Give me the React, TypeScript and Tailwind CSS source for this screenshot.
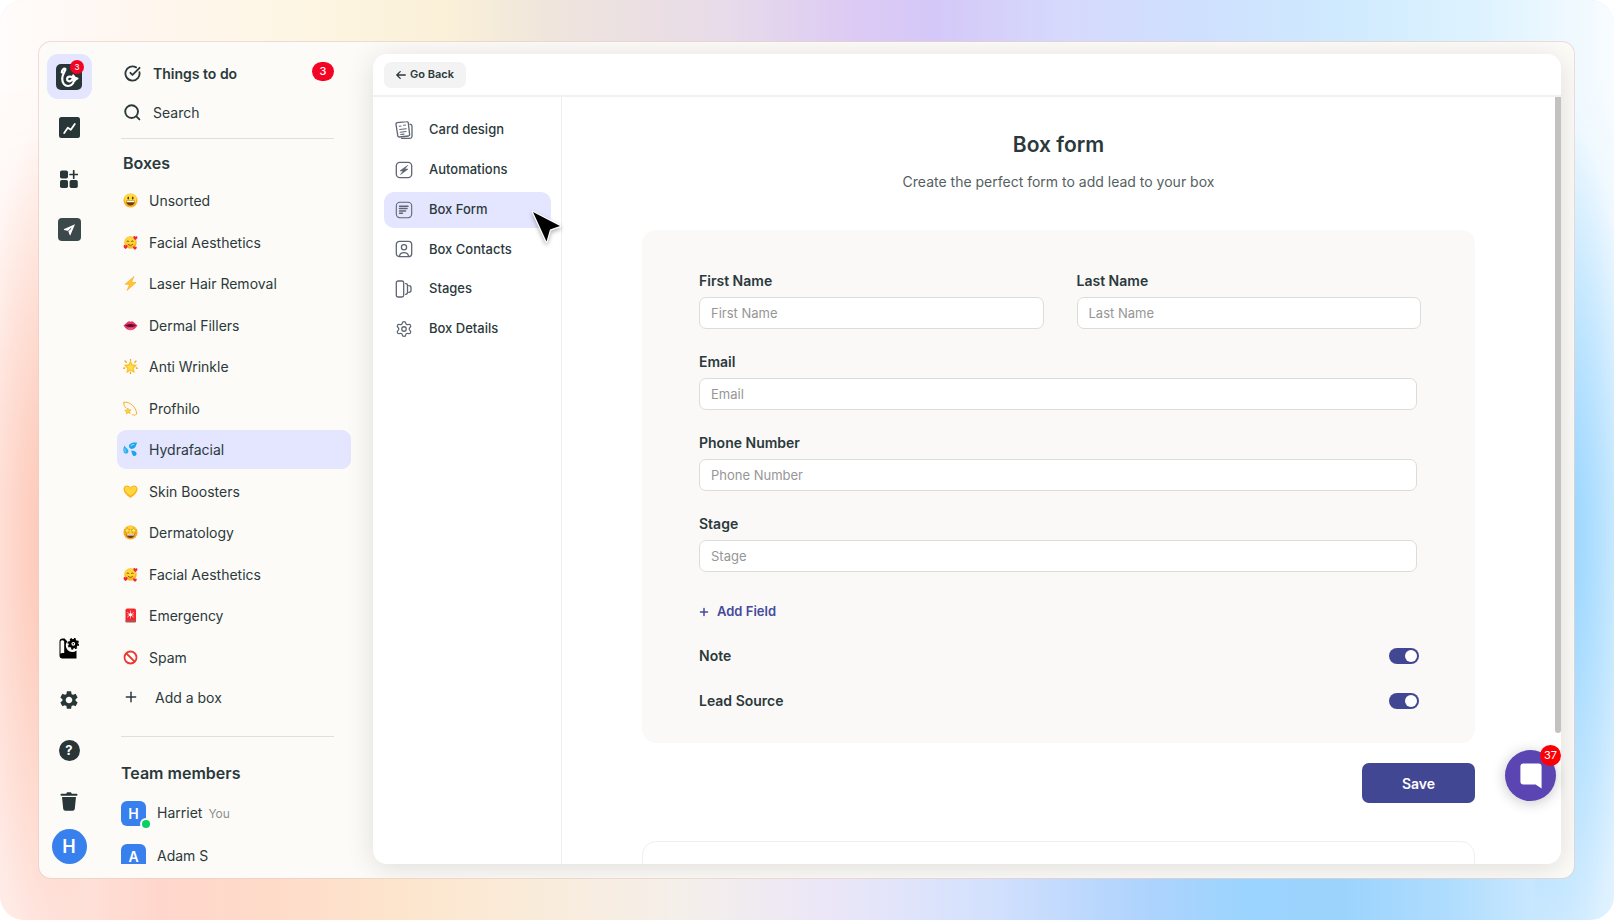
import { useId, useState, type ReactNode } from "react";

import clsx from "clsx";
import { CircleCheckBig, Plus, Settings } from "lucide-react";
import { MdSettings } from "react-icons/md";

type EmojiName =
  | "smile"
  | "hearts"
  | "bolt"
  | "lips"
  | "star"
  | "dizzy"
  | "drops"
  | "heart"
  | "starstruck"
  | "siren"
  | "banned";

const boxes: { name: string; emoji: EmojiName }[] = [
  { name: "Unsorted", emoji: "smile" },
  { name: "Facial Aesthetics", emoji: "hearts" },
  { name: "Laser Hair Removal", emoji: "bolt" },
  { name: "Dermal Fillers", emoji: "lips" },
  { name: "Anti Wrinkle", emoji: "star" },
  { name: "Profhilo", emoji: "dizzy" },
  { name: "Hydrafacial", emoji: "drops" },
  { name: "Skin Boosters", emoji: "heart" },
  { name: "Dermatology", emoji: "starstruck" },
  { name: "Facial Aesthetics", emoji: "hearts" },
  { name: "Emergency", emoji: "siren" },
  { name: "Spam", emoji: "banned" },
];

const settingsNav: { title: string; icon: ReactNode }[] = [
  { title: "Card design", icon: <CardDesignIcon /> },
  { title: "Automations", icon: <AutomationsIcon /> },
  { title: "Box Form", icon: <BoxFormIcon /> },
  { title: "Box Contacts", icon: <ContactsIcon /> },
  { title: "Stages", icon: <StagesIcon /> },
  { title: "Box Details", icon: <Settings className="size-[18px]" strokeWidth={1.7} /> },
];

export default function App() {
  return (
    <div className="relative isolate flex h-screen overflow-hidden rounded-[24px] pt-[41px] pr-[39px] pb-[41px] pl-[38px] font-['Inter',sans-serif] text-[#2b393c]">
      <Backdrop />

      <div className="flex min-w-0 flex-1 overflow-hidden rounded-[13px] border border-[#eacfc8]/70 bg-[#fcfbf7] bg-clip-padding">
        <Rail />
        <Sidebar />
        <Panel />
      </div>
    </div>
  );
}

function Backdrop() {
  return (
    <div className="absolute inset-0 -z-10 bg-[linear-gradient(90deg,#ffebe6_0%,#ffd6cb_10%,#fedbc9_17%,#fde5cd_25%,#faebd8_32%,#f5efea_42%,#eae6f8_52%,#d4e1fd_61%,#aed3fd_71%,#9bd4fe_77%,#9bd3fd_83%,#b0ddfe_90%,#e0f2ff_100%)]">
      <div className="absolute inset-0 bg-[linear-gradient(90deg,#fffcfb_0%,#fff6f0_8%,#fef6e4_18%,#faf0d8_28%,#efe5dc_34%,#e8dbea_45%,#dccaf4_53%,#d4c8f8_58%,#d6d9fc_66%,#cfe0ff_74%,#cfeafe_83%,#def3ff_92%,#f8fcff_100%)] [mask-image:linear-gradient(180deg,#000_0%,#000_8%,transparent_55%)]" />
      <div className="absolute inset-y-0 left-0 w-20 bg-[radial-gradient(76px_420px_at_50px_540px,#fdc6b4_0%,#fdc6b400_100%)]" />
      <div className="absolute inset-y-0 right-0 w-20 bg-[radial-gradient(76px_420px_at_30px_540px,#94d4ff_0%,#94d4ff00_100%)]" />
    </div>
  );
}

function Rail() {
  return (
    <nav
      aria-label="Workspace"
      className="flex w-[70px] shrink-0 flex-col items-center justify-between pt-3 pr-2.5 pb-3.5"
    >
      <div className="flex flex-col items-center">
        <RailButton label="Boxes" className="h-[45px] w-[45px] rounded-[11px] bg-[#e4e5ff]">
          <span className="relative">
            <LogoMark />
            <span className="absolute -top-1 -right-0.5 flex size-3.5 items-center justify-center rounded-full bg-[#f40424] text-[8px] leading-none font-medium text-white">
              3
            </span>
          </span>
        </RailButton>
        <RailButton label="Reports" className="h-[51px] w-[45px] pt-1.5">
          <ReportsIcon />
        </RailButton>
        <RailButton label="Apps" className="h-[51px] w-[45px] pt-1.5">
          <AppsIcon />
        </RailButton>
        <RailButton label="Campaigns" className="h-[51px] w-[45px] pt-1.5">
          <PlaneIcon />
        </RailButton>
      </div>

      <div className="flex flex-col items-center">
        <RailButton label="Knowledge base" className="h-[51px] w-[45px]">
          <BookIcon />
        </RailButton>
        <RailButton label="Settings" className="h-[51px] w-[45px]">
          <MdSettings className="size-[22px]" />
        </RailButton>
        <RailButton label="Help" className="h-[51px] w-[45px]">
          <span className="flex size-[21px] items-center justify-center rounded-full bg-[#293638] text-[13px] font-bold text-white">
            ?
          </span>
        </RailButton>
        <RailButton label="Trash" className="h-[51px] w-[45px]">
          <TrashIcon />
        </RailButton>
        <RailButton
          label="Profile"
          className="mt-0.5 size-[35px] rounded-full bg-[#3880ee] text-[18px] font-semibold text-white"
        >
          H
        </RailButton>
      </div>
    </nav>
  );
}

function RailButton({
  label,
  className,
  children,
}: {
  label: string;
  className?: string;
  children: ReactNode;
}) {
  return (
    <button
      type="button"
      aria-label={label}
      className={clsx("flex shrink-0 items-center justify-center text-[#293638]", className)}
    >
      {children}
    </button>
  );
}

function Sidebar() {
  const [active, setActive] = useState(6);

  return (
    <aside className="mt-3 mb-3.5 flex w-[264px] shrink-0 flex-col overflow-hidden pr-[22px] pl-2">
      <div className="flex flex-col pr-[17px] pl-1">
        <button
          type="button"
          className="flex h-[38px] items-center pl-[3px] text-[14px] font-semibold"
        >
          <CircleCheckBig className="size-[17px]" strokeWidth={2.6} />
          <span className="ml-3">Things to do</span>
          <span className="mb-1 ml-auto flex h-[19px] w-[22px] items-center justify-center rounded-full bg-[#f40424] text-[11px] font-medium text-white">
            3
          </span>
        </button>
        <button type="button" className="flex h-10 items-center pl-[3px] text-[14px]">
          <SearchIcon />
          <span className="ml-3">Search</span>
        </button>
        <div className="mt-1.5 border-t border-[#dfdfdb]" />
      </div>

      <h2 className="mt-3 pl-1.5 text-[16px] leading-6 font-semibold">Boxes</h2>

      <ul className="mt-1.5 flex h-[496px] shrink-0 flex-col justify-between">
        {boxes.map((box, index) => (
          <li key={index}>
            <button
              type="button"
              onClick={() => setActive(index)}
              className={clsx(
                "flex h-[39px] w-full items-center gap-[11px] rounded-[9px] pl-1.5 text-[14px]",
                index === active && "bg-[#e4e5ff]",
              )}
            >
              <Emoji name={box.emoji} />
              {box.name}
            </button>
          </li>
        ))}
      </ul>

      <button type="button" className="flex h-10 shrink-0 items-center pl-1.5 text-[14px]">
        <Plus className="size-4" strokeWidth={2.2} />
        <span className="ml-4">Add a box</span>
      </button>
      <div className="mt-[19px] mr-[17px] ml-1 border-t border-[#dfdfdb]" />

      <h2 className="mt-6 pl-1 text-[16px] leading-6 font-semibold">Team members</h2>
      <ul className="mt-4 flex flex-col gap-[18px] pl-1">
        <Member name="Harriet" note="You" online />
        <Member name="Adam S" />
      </ul>
    </aside>
  );
}

function Member({ name, note, online }: { name: string; note?: string; online?: boolean }) {
  return (
    <li className="flex h-[25px] items-center text-[14px]">
      <span className="relative flex size-[25px] items-center justify-center rounded-[6px] bg-[#3880ee] text-[14px] font-semibold text-white">
        {name[0]}
        {online && (
          <span className="absolute -right-1 -bottom-0.5 size-2 rounded-full bg-[#08d064] ring-2 ring-[#fcfbf7]" />
        )}
      </span>
      <span className="ml-[11px] pb-0.5">
        {name}
        {note && <span className="ml-1.5 text-[12px] text-[#8f8f8f]">{note}</span>}
      </span>
    </li>
  );
}

function Panel() {
  return (
    <main className="relative mt-3 mr-[13px] mb-3.5 flex min-w-0 flex-1 flex-col rounded-[14px] bg-white shadow-[0_4px_28px_rgba(0,0,0,0.12)]">
      <header className="flex h-[43px] shrink-0 items-center border-b-2 border-[#f1f1f1] pl-[11px]">
        <button
          type="button"
          className="flex h-[26px] w-[82px] items-center justify-center gap-1 rounded-[7px] bg-[#f3f3f4] text-[11px] font-semibold"
        >
          <ArrowIcon />
          Go Back
        </button>
      </header>

      <div className="flex min-h-0 flex-1">
        <SettingsNav />
        <BoxForm />
      </div>

      {/* scroll thumb */}
      <div className="absolute top-[43px] right-0 h-[636px] w-1.5 rounded-b-full bg-[#c3c2c0]" />

      <button
        type="button"
        aria-label="Open chat"
        className="absolute right-[5px] bottom-[63px] flex size-[51px] items-center justify-center rounded-full bg-[#5a45b2] shadow-[0_2px_14px_rgba(0,0,0,0.22)]"
      >
        <svg viewBox="0 0 22 26" className="h-[26px] w-[22px]" fill="#fff" aria-hidden="true">
          <path d="M3.4.5h15.2a3 3 0 0 1 3 3V25.4L15.6 21.6H3.4a3 3 0 0 1-3-3V3.5a3 3 0 0 1 3-3Z" />
        </svg>
        <span className="absolute -top-[5px] -right-[5px] flex size-[21px] items-center justify-center rounded-full bg-[#fb0007] text-[11px] text-white">
          37
        </span>
      </button>
    </main>
  );
}

function SettingsNav() {
  const [active, setActive] = useState("Box Form");

  return (
    <nav
      aria-label="Box settings"
      className="relative w-[189px] shrink-0 border-r border-[#efefef] pt-[15px] pr-2.5 pl-[11px]"
    >
      <ul className="flex h-[235px] flex-col justify-between">
        {settingsNav.map((item) => (
          <li key={item.title}>
            <button
              type="button"
              onClick={() => setActive(item.title)}
              className={clsx(
                "flex h-9 w-full items-center rounded-[10px] pl-[11px] text-[13px] font-medium",
                item.title === active && "bg-[#e4e5ff]",
              )}
            >
              <span className="flex w-[18px] justify-center text-[#5f6673]">{item.icon}</span>
              <span className="ml-4">{item.title}</span>
            </button>
          </li>
        ))}
      </ul>
      <Pointer />
    </nav>
  );
}

function BoxForm() {
  return (
    <section className="flex min-w-0 flex-1 flex-col items-center overflow-hidden pr-1.5">
      <form
        className="flex w-full max-w-[833px] flex-col"
        onSubmit={(event) => event.preventDefault()}
      >
        <h1 className="mt-[34px] text-center text-[21px] leading-7 font-semibold">Box form</h1>
        <p className="mt-[13px] text-center text-[14px] leading-5 text-[#555f62]">
          Create the perfect form to add lead to your box
        </p>

        <div className="mt-[38px] h-[513px] rounded-[14px] bg-[#faf9f7] pt-[41px] pr-[54px] pl-[57px]">
          <div className="grid grid-cols-2 gap-[33px]">
            <Field label="First Name" />
            <Field label="Last Name" />
          </div>
          <div className="mt-[23px] mr-1 flex flex-col gap-[23px]">
            <Field label="Email" />
            <Field label="Phone Number" />
            <Field label="Stage" />
          </div>

          <button
            type="button"
            className="mt-[30px] flex h-5 items-center gap-2 text-[13px] font-semibold text-[#454a9c]"
          >
            <Plus className="-mx-px size-3" strokeWidth={3} />
            Add Field
          </button>

          <div className="mt-6 flex flex-col gap-[25px] pr-0.5">
            <Toggle label="Note" />
            <Toggle label="Lead Source" />
          </div>
        </div>

        <button
          type="submit"
          className="mt-5 h-10 w-[113px] self-end rounded-[7px] bg-[#424794] text-[14px] font-semibold text-white"
        >
          Save
        </button>
      </form>

      <div className="mt-[38px] h-40 w-full max-w-[833px] shrink-0 rounded-[14px] border border-[#efefed]" />
    </section>
  );
}

function Field({ label }: { label: string }) {
  const id = useId();

  return (
    <div className="flex flex-col gap-1.5">
      <label htmlFor={id} className="text-[14px] leading-5 font-semibold">
        {label}
      </label>
      <input
        id={id}
        type="text"
        placeholder={label}
        className="h-8 w-full rounded-[7px] border border-[#dcdcda] bg-white px-[11px] text-[13px] outline-none placeholder:text-[#969696]"
      />
    </div>
  );
}

function Toggle({ label }: { label: string }) {
  const id = useId();

  return (
    <div className="flex h-5 items-center justify-between">
      <label htmlFor={id} className="text-[14px] leading-5 font-semibold">
        {label}
      </label>
      <input
        id={id}
        type="checkbox"
        role="switch"
        defaultChecked
        className="h-4 w-[30px] cursor-pointer appearance-none rounded-full bg-[#c3c2c0] p-0.5 transition before:block before:size-3 before:rounded-full before:bg-white before:transition checked:bg-[#424794] checked:before:translate-x-3.5"
      />
    </div>
  );
}

function Pointer() {
  return (
    <svg
      viewBox="0 0 34 38"
      className="pointer-events-none absolute top-[111px] left-[156px] z-10 h-[38px] w-[34px] drop-shadow-[0_2px_2px_rgba(0,0,0,0.3)]"
      aria-hidden="true"
    >
      <path
        d="M4 4 31 18 21 21.500 17.500 33.500Z"
        fill="#000"
        stroke="#fff"
        strokeWidth="2.400"
        strokeLinejoin="round"
        paintOrder="stroke"
      />
    </svg>
  );
}

function LogoMark() {
  return (
    <svg viewBox="0 0 26 26" className="size-[26px]" fill="none" aria-hidden="true">
      <rect width="26" height="26" rx="5" fill="#293638" />
      <path
        d="M5.800 8.300C6 6 7.600 4.200 9.200 4.800C10.600 5.500 6.300 9.500 6.200 14.600C6.100 19.300 8.800 22.200 12.400 22C16.800 21.600 18.800 17.600 17.200 14.400C15.700 11.800 11.600 12 11.100 14.800C10.900 17 13.300 18 15 16.700L17.800 13.800M17.200 11.500C18 13.600 19.300 14.400 21.400 14.500C19.800 14.900 18.900 15.700 18.500 17"
        stroke="#fff"
        strokeWidth="2.200"
        strokeLinecap="round"
        strokeLinejoin="round"
      />
    </svg>
  );
}

function ReportsIcon() {
  return (
    <svg viewBox="0 0 21 21" className="size-[21px]" aria-hidden="true">
      <rect width="21" height="21" rx="2.500" fill="#293638" />
      <path
        d="M5.200 16 8.800 10.800 11.800 12.800 15.800 7"
        fill="none"
        stroke="#fff"
        strokeWidth="1.800"
        strokeLinecap="round"
        strokeLinejoin="round"
      />
    </svg>
  );
}

function AppsIcon() {
  return (
    <svg viewBox="0 0 18 18" className="size-[18px]" fill="currentColor" aria-hidden="true">
      <rect x="0" y="0.500" width="8" height="8" rx="1.800" />
      <rect x="0" y="10" width="8" height="8" rx="1.800" />
      <rect x="9.600" y="10" width="8.200" height="8" rx="1.800" />
      <path d="M13.700 0.800v7.400M10 4.500h7.400" stroke="currentColor" strokeWidth="1.700" strokeLinecap="round" />
    </svg>
  );
}

function PlaneIcon() {
  return (
    <svg viewBox="0 0 23 23" className="size-[23px]" aria-hidden="true">
      <rect width="23" height="23" rx="4" fill="#3c494c" />
      <path d="M17 6.200 6.200 11.100a.4.4 0 0 0 0 .8L10.200 13 11.700 17a.4.4 0 0 0 .8 0Z" fill="#fff" />
      <path d="M10.200 13 13.200 10.200" stroke="#3c494c" strokeWidth="1" />
    </svg>
  );
}

function BookIcon() {
  return (
    <svg viewBox="0 0 20 21" className="h-[21px] w-5" aria-hidden="true">
      <path
        d="M3.600.6C1.800.6.500 1.900.500 3.600V17.500a3 3 0 0 0 3 3H17.500V12.600A6.500 6.500 0 0 1 8.300 3.500L5.600.6Z"
        fill="#000"
      />
      <path d="M1.500 3.600a2 2 0 0 1 3.700 0V15H3.300a3 3 0 0 0-1.800.7Z" fill="#fcfbf7" />
      <circle cx="14.300" cy="5.800" r="3.300" fill="none" stroke="#000" strokeWidth="2.800" />
      <circle cx="14.300" cy="5.800" r="5" fill="none" stroke="#000" strokeWidth="1.800" strokeDasharray="1.960 1.960" />
      <circle cx="14.300" cy="5.800" r="0.700" fill="#000" />
    </svg>
  );
}

function TrashIcon() {
  return (
    <svg viewBox="0 0 18 19" className="h-[19px] w-[18px]" fill="currentColor" aria-hidden="true">
      <path d="M6.300 1.700C6.300.8 7 .2 7.800.2h2.400c.8 0 1.500.6 1.500 1.500H16.800c.9 0 .9 2 0 2H1.200c-.9 0-.9-2 0-2Z" />
      <path d="M2 5H16L14.800 16.800A2.200 2.200 0 0 1 12.600 18.800H5.400A2.200 2.200 0 0 1 3.200 16.800Z" />
    </svg>
  );
}

function SearchIcon() {
  return (
    <svg
      viewBox="0 0 17 17"
      className="size-[17px]"
      fill="none"
      stroke="currentColor"
      strokeWidth="1.900"
      strokeLinecap="round"
      aria-hidden="true"
    >
      <circle cx="7.600" cy="7.600" r="6.400" />
      <path d="m12.600 12.600 2.800 2.800" />
    </svg>
  );
}

function ArrowIcon() {
  return (
    <svg
      viewBox="0 0 10 10"
      className="size-2.5"
      fill="none"
      stroke="currentColor"
      strokeWidth="1.300"
      strokeLinecap="round"
      strokeLinejoin="round"
      aria-hidden="true"
    >
      <path d="M9.300 5H.8M4.200 1.600.8 5l3.400 3.400" />
    </svg>
  );
}

function LineIcon({ children }: { children: ReactNode }) {
  return (
    <svg
      viewBox="0 0 18 18"
      className="size-[18px]"
      fill="none"
      stroke="currentColor"
      strokeWidth="1.300"
      strokeLinecap="round"
      strokeLinejoin="round"
      aria-hidden="true"
    >
      {children}
    </svg>
  );
}

function CardDesignIcon() {
  return (
    <LineIcon>
      <path d="M2.200 1.700 11.700.7A1.400 1.400 0 0 1 13.300 1.900L14.600 13.400A1.400 1.400 0 0 1 13.400 15L4.400 16A1.400 1.400 0 0 1 2.800 14.800L1 3.300A1.400 1.400 0 0 1 2.200 1.700Z" />
      <path d="M15 3.200C16.300 3.300 17 4 17 5.200V15.500A2 2 0 0 1 15 17.300H6.500" />
      <path d="M4.200 5.200 6 5M8.500 4.200 10.500 4M4.700 8.500 11.300 7.700M5.200 11.200 11 10.500M5.700 13.500 9 13.100" strokeWidth="1.100" />
    </LineIcon>
  );
}

function AutomationsIcon() {
  return (
    <LineIcon>
      <rect x="1.300" y="1.300" width="15.400" height="15.400" rx="3.600" />
      <path d="M12.500 4.500 5 9.800 8 10 5.500 13.500 13 8.200 10 8Z" fill="currentColor" strokeWidth="0.600" />
    </LineIcon>
  );
}

function BoxFormIcon() {
  return (
    <LineIcon>
      <rect x="1.300" y="1.300" width="15.400" height="15.400" rx="3.600" strokeWidth="1.100" />
      <path d="M4.500 5.300h8.500M4.500 7.600h7.500M4.500 9.900h6M4.500 12.200h3" strokeWidth="1.500" />
    </LineIcon>
  );
}

function ContactsIcon() {
  return (
    <LineIcon>
      <rect x="1.300" y="1.300" width="15.400" height="15.400" rx="3.200" />
      <circle cx="9" cy="7.300" r="2.600" />
      <path d="M4.500 16.200c.3-2.600 2-3.600 4.500-3.600s4.200 1 4.500 3.600" />
    </LineIcon>
  );
}

function StagesIcon() {
  return (
    <LineIcon>
      <rect x="1.300" y="1" width="7.400" height="16" rx="1.800" />
      <path d="M10.600 3.600c1.400 0 1.900.7 1.900 1.800v7.200c0 1.100-.5 1.800-1.900 1.800M13.800 5.600c1.400 0 2.200.7 2.200 1.800v3.200c0 1.100-.8 1.800-2.200 1.800" />
    </LineIcon>
  );
}

function Emoji({ name }: { name: EmojiName }) {
  return (
    <svg viewBox="0 0 30 30" className="size-[15px] shrink-0" aria-hidden="true">
      {emojiArt[name]}
    </svg>
  );
}

const emojiArt: Record<EmojiName, ReactNode> = {
  smile: (
    <>
      <circle cx="15" cy="15" r="14" fill="#fdb01c" />
      <ellipse cx="15" cy="12" rx="12" ry="10.500" fill="#ffdc3f" />
      <ellipse cx="10.500" cy="10" rx="1.700" ry="3" fill="#5b3208" />
      <ellipse cx="19.500" cy="10" rx="1.700" ry="3" fill="#5b3208" />
      <path d="M6 15.500h18c0 6-4 9.500-9 9.500s-9-3.500-9-9.500Z" fill="#6d3a10" />
      <path d="M7 16h16v2.500H7Z" fill="#fff" />
    </>
  ),
  hearts: (
    <>
      <circle cx="15" cy="15" r="12.500" fill="#fdb51c" />
      <ellipse cx="14.500" cy="12.500" rx="10.500" ry="9" fill="#ffd63a" />
      <path
        d="M8 13c.5-2 3-2 3.500 0M17 13c.5-2 3-2 3.500 0M10 18.500c2.500 3 7 3 9.500 0"
        fill="none"
        stroke="#6d3a10"
        strokeWidth="1.600"
        strokeLinecap="round"
      />
      <path d="M24.500 10C20.500 8 19.500 3.500 22 2.200c1.500-.8 2.700.4 3 1.600.8-1.200 2.500-1.500 3.500-.3C30 6 27.500 8.500 24.500 10Z" fill="#ef2440" />
      <path d="M5.500 28C1.500 26 .3 22.500 1.800 20.500c1.200-1.300 3-.5 3.400.8C6 20 8 19.800 8.800 21.200 9.800 23.500 8 26.500 5.500 28Z" fill="#ef2440" />
      <path d="M24 29.500c-3.500-1.700-4.700-4.700-3.200-6.500 1.200-1.200 2.700-.5 3.200.8.700-1.200 2.500-1.500 3.300 0 .9 2-.8 4.400-3.300 5.700Z" fill="#ef2440" />
    </>
  ),
  bolt: <path d="M22 1 4 16.500 13 17 8 29 26 13 17 12.500Z" fill="#ffc42e" stroke="#f7a21b" strokeWidth="1" />,
  lips: (
    <>
      <path d="M1 15C6 11 9 6.500 12 6.500c1.500 0 2 1 3 1s1.500-1 3-1c3 0 6 4.500 11 8.500-4 6-8 9.500-14 9.500S5 21 1 15Z" fill="#e2386b" />
      <path d="M4 15c4-2 8-3 11-3s7 1 11 3c-4 2-7 3-11 3S8 17 4 15Z" fill="#5e1030" />
      <path d="M10 21.500c3 1 7 1 10 0" stroke="#f989a8" strokeWidth="1.500" fill="none" />
    </>
  ),
  star: (
    <>
      <path d="m15 4 3.500 7.500 8.500 1-6.300 5.800L22.500 27 15 22.500 7.500 27l1.800-8.700L3 12.500l8.500-1Z" fill="#fdbd22" stroke="#fdbd22" strokeWidth="1.500" strokeLinejoin="round" />
      <path d="m15 8 2.300 5.500 5.500.7-4 3.800 1 5.500-4.800-3-4.800 3 1-5.500-4-3.800 5.500-.7Z" fill="#ffe14d" />
      <path d="M15 .5v2M4 4l2.500 2.500M26 4l-2.500 2.500M1.500 18.500l2-.5M28.500 18.500l-2-.5M15 26.500V29" stroke="#f9a51a" strokeWidth="2.600" strokeLinecap="round" />
    </>
  ),
  dizzy: (
    <>
      <path d="M2 2.500C14 .5 26.500 12 27.500 26c-3 3-6 2.500-8.500 1.500M2 2.500C.8 8 3 12 6 14" fill="none" stroke="#f5b32a" strokeWidth="2" strokeLinecap="round" />
      <path d="m9.500 14 2 3.500 4.500.2-2.800 3.200 1.300 4-4.200-1.600-3.600 2.400.2-4.400L3.500 19l4.300-1Z" fill="#ffd23b" stroke="#f5a81e" strokeWidth="1.200" />
    </>
  ),
  drops: (
    <>
      <path d="M28.500 1.500C18 0 11 4 12 9.500c1 4.800 7.500 5.800 11.500 2C26 9 26 5 28.500 1.500Z" fill="#1ba5ee" />
      <path d="M3 7c-3.300 6.500-3.300 14.500 1.500 16 4.300 1 7.300-2.500 5.800-7C9 12.500 5 11.500 3 7Z" fill="#27aef2" />
      <path d="M16 17.500c4.500-.5 9.500.5 11 4.500 1 3.300-1.500 6.500-4.800 6-4.200-.9-3.700-6.500-6.200-10.500Z" fill="#1ba5ee" />
      <path d="M15 8c1.500-2 4-3 6.500-3M4 14c-.5 2-.3 4 .8 5.500" stroke="#a5e4ff" strokeWidth="1.800" fill="none" strokeLinecap="round" />
    </>
  ),
  heart: (
    <>
      <path d="M15 28C6 22 1 16.500 1 10.200 1 5.500 4.200 2.800 8 2.800c3 0 5.500 1.600 7 4.400 1.500-2.800 4-4.400 7-4.400 3.800 0 7 2.700 7 7.400C29 16.500 24 22 15 28Z" fill="#fdb01b" />
      <path d="M15 23.500C8.500 19 3.500 14.500 3.500 10 3.500 7 5.500 5 8.300 5c3.200 0 5.500 2 6.700 5.500C16.200 7 18.500 5 21.700 5c2.800 0 4.800 2 4.800 5 0 4.500-5 9-11.500 13.500Z" fill="#ffd83d" />
    </>
  ),
  starstruck: (
    <>
      <circle cx="15" cy="15" r="14" fill="#f9a51f" />
      <ellipse cx="15" cy="10" rx="12" ry="8" fill="#ffd23b" />
      <path d="m8.500 5 1.700 3.700 4 .5-3 2.700.9 4-3.600-2-3.600 2 .9-4-3-2.700 4-.5ZM21.500 5l1.700 3.700 4 .5-3 2.700.9 4-3.600-2-3.600 2 .9-4-3-2.700 4-.5Z" fill="#fff04f" stroke="#c87812" strokeWidth="1" />
      <path d="M6.500 18h17c-.5 5-4 8-8.500 8s-8-3-8.500-8Z" fill="#6d3a10" />
      <path d="M7.500 18.500h15v2.500H8Z" fill="#fff" />
    </>
  ),
  siren: (
    <>
      <rect x="5" y="1" width="21" height="27" rx="3.500" fill="#f2282f" />
      <rect x="5" y="24" width="21" height="5" rx="2.500" fill="#b5504f" />
      <path d="M15 6v14M9 9l12 9M9 18l12-9M10 13.500h11" stroke="#ffc5ca" strokeWidth="1.600" strokeLinecap="round" />
      <circle cx="15" cy="13.500" r="3" fill="#fff" />
    </>
  ),
  banned: (
    <>
      <circle cx="15" cy="15" r="12" fill="#fff" stroke="#ea3a30" strokeWidth="3.600" />
      <path d="M7 7l16 16" stroke="#ea3a30" strokeWidth="3.600" />
    </>
  ),
};
